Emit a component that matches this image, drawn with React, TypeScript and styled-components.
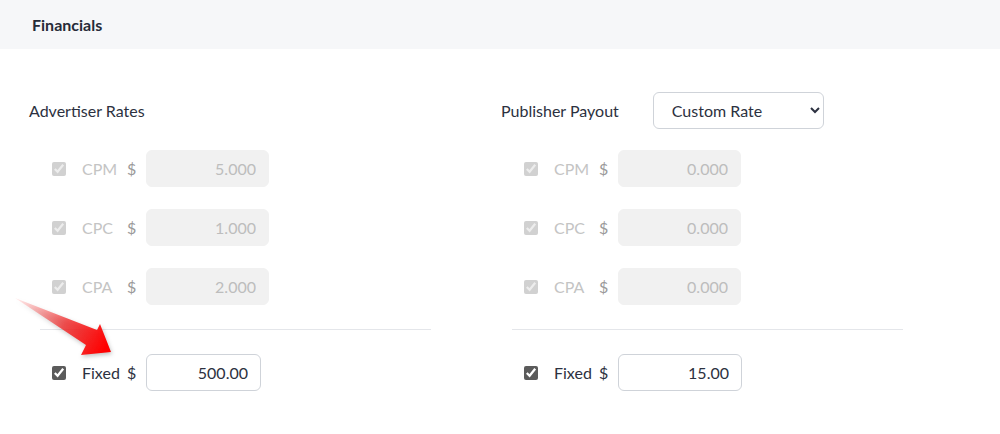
import styled, { createGlobalStyle } from "styled-components";

const GlobalStyle = createGlobalStyle`
  html, body {
    margin: 0;
    padding: 0;
    background: #ffffff;
    font-family: "Lato", "Open Sans", sans-serif;
    color: #2c3140;
  }
`;

const Page = styled.div`
  position: relative;
  width: 1000px;
  height: 434px;
  overflow: hidden;
`;

const Header = styled.div`
  height: 49px;
  background: #f6f7f9;
  display: flex;
  align-items: center;
  padding-left: 32px;
  font-size: 16px;
  font-weight: 700;
  color: #262b38;
`;

const Body = styled.div`
  display: grid;
  grid-template-columns: 472px 472px;
  padding: 43px 0 0 29px;
`;

const Column = styled.div`
  display: flex;
  flex-direction: column;
`;

const HeadingRow = styled.div`
  height: 37px;
  display: flex;
  align-items: center;
  gap: 34px;
  font-size: 16px;
  margin-bottom: 21px;
`;

const Select = styled.select`
  width: 171px;
  height: 37px;
  border: 1px solid #cfd3d9;
  border-radius: 6px;
  background: #fff;
  font-family: inherit;
  font-size: 16px;
  color: #2c3140;
  padding: 0 8px 0 14px;
  outline: none;
`;

const Row = styled.div`
  height: 37px;
  display: flex;
  align-items: center;
  padding-left: 23px;
  margin-bottom: 22px;
`;

const Check = styled.input`
  width: 14px;
  height: 14px;
  margin: 0;
  accent-color: #5b5b5b;
`;

const Label = styled.span<{ $off?: boolean }>`
  width: 45px;
  margin-left: 16px;
  font-size: 16px;
  color: ${(p) => (p.$off ? "#c4c4c4" : "#2c3140")};
`;

const Dollar = styled.span<{ $off?: boolean }>`
  width: 19px;
  font-size: 16px;
  color: ${(p) => (p.$off ? "#9a9a9a" : "#2c3140")};
`;

const Amount = styled.input<{ $w: number }>`
  box-sizing: border-box;
  width: ${(p) => p.$w}px;
  height: 37px;
  border: 1px solid #cfd3d9;
  border-radius: 6px;
  background: #fff;
  font-family: inherit;
  font-size: 16px;
  color: #2c3140;
  text-align: right;
  padding: 0 12px;
  outline: none;

  &:disabled {
    background: #f1f1f1;
    border-color: #f1f1f1;
    color: #bdbdbd;
  }
`;

const Divider = styled.div`
  width: 391px;
  height: 1px;
  background: #e4e6ea;
  margin: 2px 0 24px 11px;
`;

const Arrow = styled.svg`
  position: absolute;
  left: 0;
  top: 280px;
  filter: drop-shadow(1px 2px 2px rgba(0, 0, 0, 0.25));
`;

type Rate = { name: string; value: string };

const RateBlock = ({
  title,
  rates,
  fixed,
  fixedWidth,
  withSelect,
}: {
  title: string;
  rates: Rate[];
  fixed: string;
  fixedWidth: number;
  withSelect?: boolean;
}) => (
  <Column>
    <HeadingRow>
      <span>{title}</span>
      {withSelect && (
        <Select defaultValue="custom">
          <option value="custom">Custom Rate</option>
        </Select>
      )}
    </HeadingRow>
    {rates.map((r) => (
      <Row key={r.name}>
        <Check type="checkbox" checked disabled readOnly />
        <Label $off>{r.name}</Label>
        <Dollar $off>$</Dollar>
        <Amount $w={123} value={r.value} disabled readOnly />
      </Row>
    ))}
    <Divider />
    <Row>
      <Check type="checkbox" checked readOnly />
      <Label>Fixed</Label>
      <Dollar>$</Dollar>
      <Amount $w={fixedWidth} value={fixed} readOnly />
    </Row>
  </Column>
);

export default function App() {
  return (
    <Page>
      <GlobalStyle />
      <Header>Financials</Header>
      <Body>
        <RateBlock
          title="Advertiser Rates"
          rates={[
            { name: "CPM", value: "5.000" },
            { name: "CPC", value: "1.000" },
            { name: "CPA", value: "2.000" },
          ]}
          fixed="500.00"
          fixedWidth={115}
        />
        <RateBlock
          title="Publisher Payout"
          withSelect
          rates={[
            { name: "CPM", value: "0.000" },
            { name: "CPC", value: "0.000" },
            { name: "CPA", value: "0.000" },
          ]}
          fixed="15.00"
          fixedWidth={124}
        />
      </Body>
      <Arrow width="130" height="90" viewBox="0 280 130 90">
        <defs>
          <linearGradient id="arrowFill" x1="15" y1="298" x2="105" y2="348" gradientUnits="userSpaceOnUse">
            <stop offset="0" stopColor="#ff6b6b" stopOpacity="0.12" />
            <stop offset="0.55" stopColor="#f22a2a" stopOpacity="0.8" />
            <stop offset="1" stopColor="#ff0000" />
          </linearGradient>
        </defs>
        <polygon
          points="15,298 97,330 100,324 111,352 81,355 86,345"
          fill="url(#arrowFill)"
        />
      </Arrow>
    </Page>
  );
}
